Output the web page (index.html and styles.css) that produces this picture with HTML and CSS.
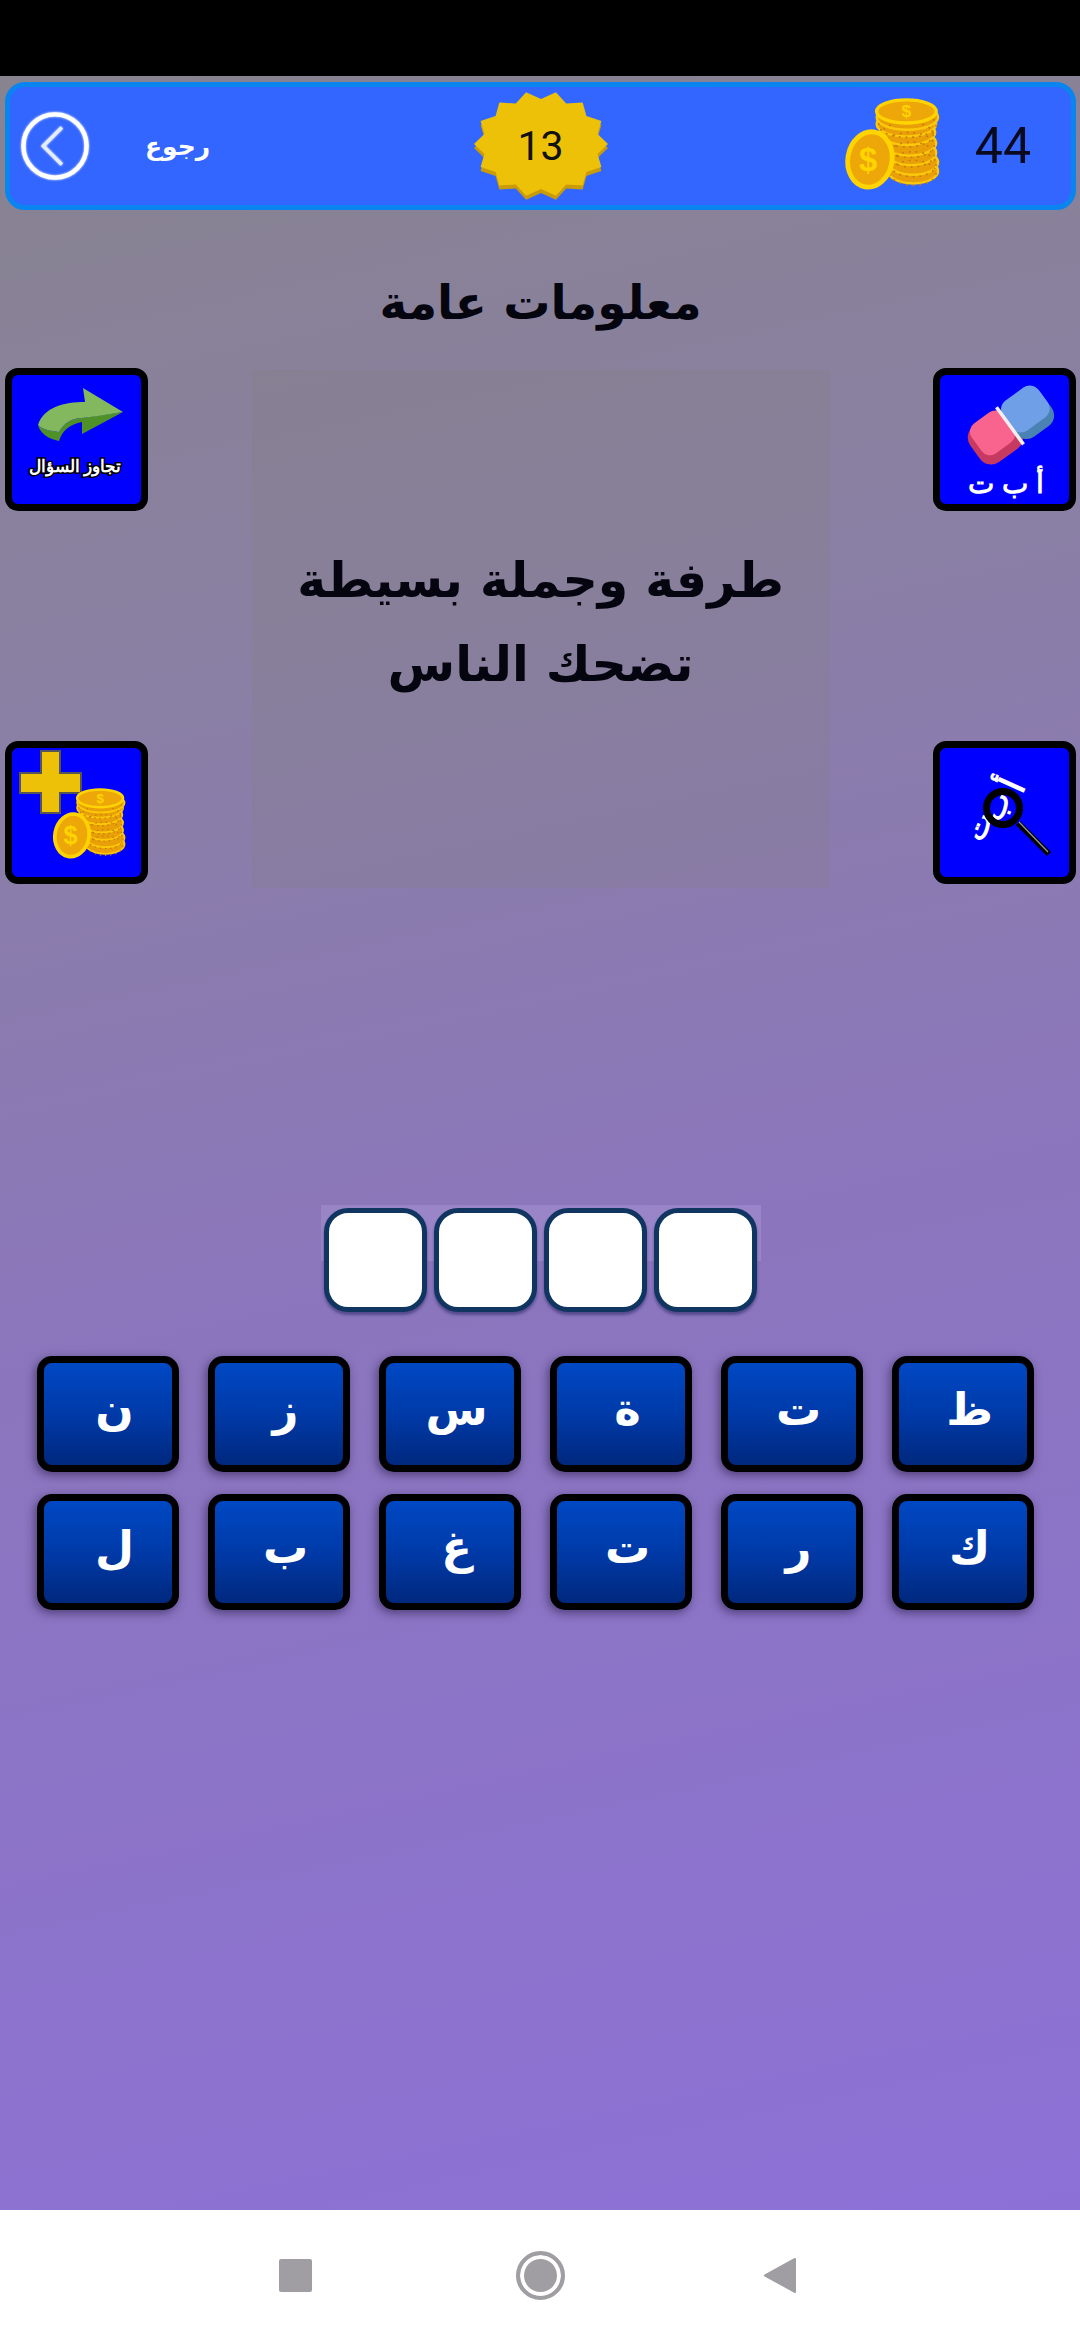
FILE: index.html
```html
<!DOCTYPE html>
<html lang="ar">
<head>
<meta charset="utf-8">
<title>معلومات عامة</title>
<link rel="stylesheet" href="styles.css">
</head>
<body>
<svg class="defs" width="0" height="0" aria-hidden="true">
  <defs>
    <symbol id="coins" viewBox="0 0 100 100">
      <g fill="#e99f08" stroke="#fcc80a" stroke-width="2.5">
        <ellipse cx="72" cy="76" rx="26" ry="13"/>
        <ellipse cx="72" cy="67" rx="26" ry="13"/>
        <ellipse cx="70" cy="57" rx="26" ry="13"/>
        <ellipse cx="68" cy="47" rx="28" ry="13"/>
        <ellipse cx="66" cy="36" rx="29" ry="13"/>
        <ellipse cx="65" cy="27" rx="31" ry="13"/>
        <ellipse cx="66" cy="20" rx="32" ry="13"/>
      </g>
      <g fill="none" stroke="#c67c05" stroke-width="1.6" stroke-dasharray="2 5">
        <ellipse cx="72" cy="78" rx="24" ry="13"/>
        <ellipse cx="72" cy="69" rx="24" ry="13"/>
        <ellipse cx="70" cy="59" rx="24" ry="13"/>
        <ellipse cx="68" cy="49" rx="26" ry="13"/>
        <ellipse cx="66" cy="38" rx="27" ry="13"/>
        <ellipse cx="66" cy="28" rx="30" ry="13"/>
      </g>
      <ellipse cx="65" cy="14" rx="31" ry="12" fill="#eea708" stroke="#ffd400" stroke-width="3.5"/>
      <text x="65" y="20" class="coin-sign coin-sign-top">$</text>
      <ellipse cx="27" cy="64" rx="23" ry="29" fill="#eea708" stroke="#ffd400" stroke-width="5" transform="rotate(10 27 64)"/>
      <text x="25" y="76" class="coin-sign">$</text>
    </symbol>
  </defs>
</svg>

<div class="status-bar"></div>

<main class="game">
  <header class="top-bar">
    <div class="top-start">
      <svg class="back-icon" viewBox="0 0 72 72">
        <circle cx="36" cy="36" r="32.5" fill="none" stroke="#fff" stroke-width="4.5"/>
        <path d="M43 17 L24 36 L43 55" fill="none" stroke="#e4ecff" stroke-width="3.5"/>
      </svg>
      <span class="back-label">رجوع</span>
    </div>
    <div class="level-badge">
      <svg class="level-star" viewBox="0 0 136 112">
        <polygon class="star-shade" points="135,54 124.6,64 128.4,77 113.4,82 109.7,95.4 93.2,94.5 82.9,105.7 68,99 53.1,105.7 42.8,94.5 26.3,95.4 22.6,82 7.6,77 11.4,64 1,54 11.4,44 7.6,31 22.6,26 26.3,12.6 42.8,13.5 53.1,2.3 68,9 82.9,2.3 93.2,13.5 109.7,12.6 113.4,26 128.4,31 124.6,44"/>
        <polygon class="star-face" points="135,54 124.6,64 128.4,77 113.4,82 109.7,95.4 93.2,94.5 82.9,105.7 68,99 53.1,105.7 42.8,94.5 26.3,95.4 22.6,82 7.6,77 11.4,64 1,54 11.4,44 7.6,31 22.6,26 26.3,12.6 42.8,13.5 53.1,2.3 68,9 82.9,2.3 93.2,13.5 109.7,12.6 113.4,26 128.4,31 124.6,44"/>
      </svg>
      <span class="level-number">13</span>
    </div>
    <div class="top-end">
      <svg class="top-coins"><use href="#coins"/></svg>
      <span class="coin-count">44</span>
    </div>
  </header>

  <h1 class="category">معلومات عامة</h1>

  <section class="board">
    <div class="tools">
      <button class="tool">
        <svg viewBox="0 0 129 129">
          <path d="M26 50 C28 58 36 64 47 66 C50 56 58 49 70 47 L70 59 L111 37 L70 43 C60 43 52 48 47 57 C38 56 30 54 26 50Z" fill="#4f9128"/>
          <path d="M26 50 C32 32 52 27 73 27 L71 13 L111 37 L86 41 L70 43 C60 43 52 48 47 57 C38 56 30 54 26 50Z" fill="#84b85e"/>
          <text x="63" y="97" class="skip-label">تجاوز السؤال</text>
        </svg>
      </button>
      <button class="tool">
        <svg viewBox="0 0 129 129">
          <path class="plus" d="M29 3 H48 V25 H69 V45 H48 V65 H29 V45 H8 V25 H29Z"/>
          <use href="#coins" x="39" y="40" width="76" height="74"/>
        </svg>
      </button>
    </div>

    <div class="question">
      <p>طرفة وجملة بسيطة<br>تضحك الناس</p>
    </div>

    <div class="tools">
      <button class="tool">
        <svg viewBox="0 0 129 129">
          <g transform="translate(69 49) rotate(-36)">
            <rect x="-44" y="-19" width="50" height="44" rx="14" fill="#c63a62"/>
            <rect x="0" y="-19" width="44" height="44" rx="13" fill="#4a82b4"/>
            <rect x="-38" y="-21" width="39" height="37" rx="10" fill="#f8648e"/>
            <rect x="0" y="-21" width="44" height="37" rx="11" fill="#6f9fe6"/>
            <rect x="-2" y="-21" width="3.5" height="46" fill="#f4eef0"/>
          </g>
          <text x="66" y="118" class="eraser-label">أ ب ت</text>
        </svg>
      </button>
      <button class="tool">
        <svg viewBox="0 0 129 129">
          <text class="glass-letter glass-alef" transform="translate(84 42) rotate(-66)">أ</text>
          <text class="glass-letter" transform="translate(66 62) rotate(-66)">ب</text>
          <text class="glass-letter" transform="translate(48 82) rotate(-66)">ت</text>
          <circle cx="63" cy="60" r="16.5" fill="none" stroke="#000" stroke-width="7"/>
          <path d="M78 75 L109 106" stroke="#000" stroke-width="6"/>
          <path d="M79 74 L108 104" stroke="#999" stroke-width="1.2"/>
        </svg>
      </button>
    </div>
  </section>

  <section class="answer">
    <span class="slot"></span>
    <span class="slot"></span>
    <span class="slot"></span>
    <span class="slot"></span>
  </section>

  <section class="keys">
    <button class="key">ظ</button>
    <button class="key">ت</button>
    <button class="key">ة</button>
    <button class="key">س</button>
    <button class="key">ز</button>
    <button class="key">ن</button>
    <button class="key">ك</button>
    <button class="key">ر</button>
    <button class="key">ت</button>
    <button class="key">غ</button>
    <button class="key">ب</button>
    <button class="key">ل</button>
  </section>
</main>

<nav class="nav-bar">
  <span class="nav-square"></span>
  <span class="nav-home"></span>
  <svg class="nav-back" viewBox="0 0 32 37"><path d="M31 2 V35 L1 18.5Z" fill="#a09ea2" stroke="#a09ea2" stroke-width="2" stroke-linejoin="round"/></svg>
</nav>
</body>
</html>
```
FILE: styles.css
```css
* {
  box-sizing: border-box;
}

html,
body {
  margin: 0;
  height: 2340px;
}

body {
  display: flex;
  flex-direction: column;
  font-family: "DejaVu Sans", sans-serif;
  overflow: hidden;
}

.defs {
  position: absolute;
}

.status-bar {
  flex: none;
  height: 76px;
  background: #000;
}

.game {
  flex: 1;
  min-height: 0;
  display: flex;
  flex-direction: column;
  padding: 6px 4px 0 5px;
  background: linear-gradient(168deg, #87838f 0%, #8a80a2 25%, #8b76bd 55%, #8d70d6 100%);
}

/* Top bar */
.top-bar {
  flex: none;
  height: 128px;
  display: grid;
  grid-template-columns: 1fr auto 1fr;
  align-items: center;
  background: #3366ff;
  border: 5px solid #0a84ee;
  border-radius: 20px;
}

.top-start,
.top-end {
  display: flex;
  align-items: center;
}

.top-start {
  padding-left: 10px;
}

.top-end {
  justify-content: flex-end;
  gap: 34px;
  padding-right: 40px;
}

.back-icon {
  width: 70px;
  height: 70px;
  filter: drop-shadow(0 0 1px #fff);
}

.back-label {
  margin-left: 55px;
  color: #fff;
  font-size: 25px;
  font-weight: 700;
}

.level-badge {
  position: relative;
  width: 136px;
  height: 112px;
  display: flex;
  align-items: center;
  justify-content: center;
}

.level-star {
  position: absolute;
  inset: 0;
  width: 136px;
  height: 112px;
}

.star-shade {
  fill: #c99a0a;
  transform: translateY(4px);
}

.star-face {
  fill: #ecc108;
}

.level-number {
  position: relative;
  font-family: Roboto, sans-serif;
  font-size: 41px;
  color: #111;
}

.top-coins {
  width: 98px;
  height: 96px;
}

.coin-count {
  font-family: Roboto, sans-serif;
  font-size: 50px;
  color: #0a0a1e;
}

.coin-sign {
  font-family: "Liberation Sans", sans-serif;
  font-weight: 700;
  font-size: 34px;
  fill: #ffd400;
  text-anchor: middle;
}

.coin-sign-top {
  font-size: 18px;
}

/* Title and board */
.category {
  flex: none;
  margin: 0;
  height: 158px;
  padding-top: 58px;
  text-align: center;
  font-size: 47px;
  line-height: 70px;
  font-weight: 700;
  color: #050510;
}

.board {
  flex: none;
  display: flex;
  justify-content: space-between;
  height: 520px;
}

.tools {
  display: flex;
  flex-direction: column;
  gap: 230px;
}

.tool {
  display: block;
  width: 143px;
  height: 143px;
  padding: 0;
  background: #0000ff;
  border: 7px solid #000;
  border-radius: 13px;
  overflow: hidden;
}

.tool svg {
  display: block;
  width: 129px;
  height: 129px;
}

.skip-label {
  font-size: 17px;
  font-weight: 700;
  fill: #fff;
  stroke: #000;
  stroke-width: 3px;
  paint-order: stroke;
  text-anchor: middle;
}

.eraser-label {
  font-size: 28px;
  font-weight: 700;
  fill: #fff;
  text-anchor: middle;
}

.plus {
  fill: #ecc108;
  stroke: #555;
  stroke-width: 2;
}

.glass-letter {
  font-size: 30px;
  font-weight: 700;
  fill: #fff;
  text-anchor: middle;
}

.glass-alef {
  font-size: 36px;
}

.question {
  width: 578px;
  height: 518px;
  margin-top: 2px;
  display: flex;
  justify-content: center;
  padding-top: 169px;
  background: rgba(125, 125, 115, 0.18);
}

.question p {
  margin: 0;
  text-align: center;
  font-size: 49px;
  line-height: 84px;
  font-weight: 700;
  color: #050510;
}

/* Answer slots */
.answer {
  flex: none;
  align-self: center;
  display: flex;
  gap: 7px;
  width: 440px;
  margin-top: 317px;
  margin-left: 1px;
  padding: 3px 3px 0;
  background: linear-gradient(rgba(170, 150, 215, 0.45) 52%, transparent 52%);
}

.slot {
  width: 103px;
  height: 104px;
  background: #fff;
  border: 5px solid #0f3560;
  border-radius: 24px;
  box-shadow: 0 3px 3px rgba(30, 30, 90, 0.5);
}

/* Letter keys */
.keys {
  flex: none;
  direction: rtl;
  display: grid;
  grid-template-columns: repeat(6, 142px);
  grid-auto-rows: 116px;
  justify-content: center;
  column-gap: 29px;
  row-gap: 22px;
  margin-top: 44px;
  margin-left: -10px;
}

.key {
  padding: 0 0 10px 13px;
  font-family: "DejaVu Sans", sans-serif;
  font-size: 45px;
  font-weight: 700;
  color: #fff;
  background: linear-gradient(#0048c4 0%, #003aa8 50%, #00287e 100%);
  border: 7px solid #000;
  border-radius: 15px;
  box-shadow: -2px 3px 10px rgba(30, 20, 60, 0.55);
}

/* System navigation */
.nav-bar {
  flex: none;
  height: 130px;
  display: flex;
  align-items: center;
  justify-content: space-between;
  background: #fff;
  padding: 0 284px 0 279px;
}

.nav-square {
  width: 33px;
  height: 33px;
  border-radius: 2px;
  background: #a09ea2;
}

.nav-home {
  width: 49px;
  height: 49px;
  margin-left: 5px;
  border-radius: 50%;
  background: #a09ea2;
  border: 4px solid #a09ea2;
  box-shadow: inset 0 0 0 4px #fff;
}

.nav-back {
  width: 32px;
  height: 37px;
}
```
